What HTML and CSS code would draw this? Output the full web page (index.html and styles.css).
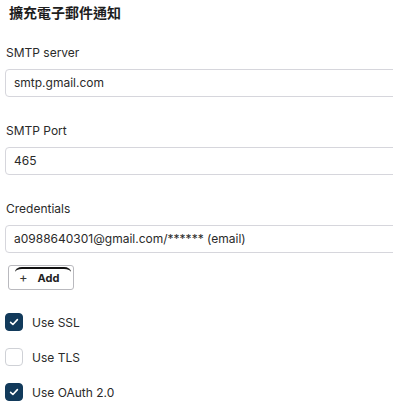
FILE: index.html
```html
<!DOCTYPE html>
<html>
<head>
<meta charset="utf-8">
<link rel="stylesheet" href="styles.css">
</head>
<body>
<div class="page">
  <h1 class="title">擴充電子郵件通知</h1>
  <div class="field">
    <div class="label">SMTP server</div>
    <div class="input">smtp.gmail.com</div>
  </div>
  <div class="field">
    <div class="label">SMTP Port</div>
    <div class="input">465</div>
  </div>
  <div class="field">
    <div class="label">Credentials</div>
    <div class="input">a0988640301@gmail.com/****** (email)</div>
    <button class="add"><span class="plus">+</span><span class="add-text">Add</span></button>
  </div>
  <div class="checks">
    <label class="check"><span class="box on"><svg viewBox="0 0 18 18" width="18" height="18"><path d="M5.6 9.3 L7.9 11.5 L12.4 6.6" fill="none" stroke="#fff" stroke-width="1.6" stroke-linecap="round" stroke-linejoin="round"/></svg></span><span class="check-text">Use SSL</span></label>
    <label class="check"><span class="box"></span><span class="check-text">Use TLS</span></label>
    <label class="check"><span class="box on"><svg viewBox="0 0 18 18" width="18" height="18"><path d="M5.6 9.3 L7.9 11.5 L12.4 6.6" fill="none" stroke="#fff" stroke-width="1.6" stroke-linecap="round" stroke-linejoin="round"/></svg></span><span class="check-text">Use OAuth 2.0</span></label>
  </div>
</div>
</body>
</html>
```

FILE: styles.css
```css
html, body {
  margin: 0;
  padding: 0;
  background: #fff;
  overflow: hidden;
}
.page {
  width: 420px;
  padding: 3px 0 0 5px;
  font-family: Inter, "Noto Sans", "Noto Sans CJK TC", sans-serif;
  color: #222;
}
.title {
  margin: 0 0 0 4px;
  font-family: "Noto Sans CJK TC", sans-serif;
  font-size: 14px;
  font-weight: 700;
  line-height: 18px;
  color: #1e1e1e;
}
.field {
  display: flex;
  flex-direction: column;
  margin-top: 26px;
}
.field:first-of-type {
  margin-top: 24px;
}
.label {
  font-size: 12px;
  line-height: 16px;
  margin-left: 1px;
  margin-bottom: 8px;
  color: #2a2a2a;
}
.input {
  height: 26px;
  border: 1px solid #d6d6dc;
  border-radius: 4px;
  padding: 0 8px;
  font-size: 12px;
  line-height: 26px;
  color: #2a2a2a;
  width: 420px;
}
.add {
  position: relative;
  align-self: flex-start;
  margin: 12px 0 0 3px;
  width: 66px;
  height: 25px;
  border: 1px solid #b9b9be;
  border-radius: 3px;
  background: #fff;
  display: flex;
  align-items: center;
  padding: 0 0 0 10px;
  gap: 10px;
  font-family: Inter, "Noto Sans", sans-serif;
  color: #222;
}
.add::before {
  content: "";
  position: absolute;
  left: 6px;
  right: 2px;
  top: 1px;
  height: 6px;
  border-top: 2.5px solid #111;
  border-radius: 7px 7px 0 0 / 5px 5px 0 0;
}
.plus {
  font-size: 13px;
  font-weight: 400;
  line-height: 1;
  color: #333;
}
.add-text {
  font-size: 11px;
  font-weight: 700;
}
.checks {
  display: flex;
  flex-direction: column;
  gap: 17px;
  margin-top: 23px;
}
.check {
  display: flex;
  align-items: center;
  gap: 9px;
  font-size: 12px;
  color: #2a2a2a;
}
.box {
  width: 18px;
  height: 18px;
  box-sizing: border-box;
  border: 1px solid #cfd1d6;
  border-radius: 4px;
  background: #fff;
  display: flex;
}
.box.on {
  background: #123a5b;
  border-color: #123a5b;
}
.box svg {
  margin: -1px;
}
```
